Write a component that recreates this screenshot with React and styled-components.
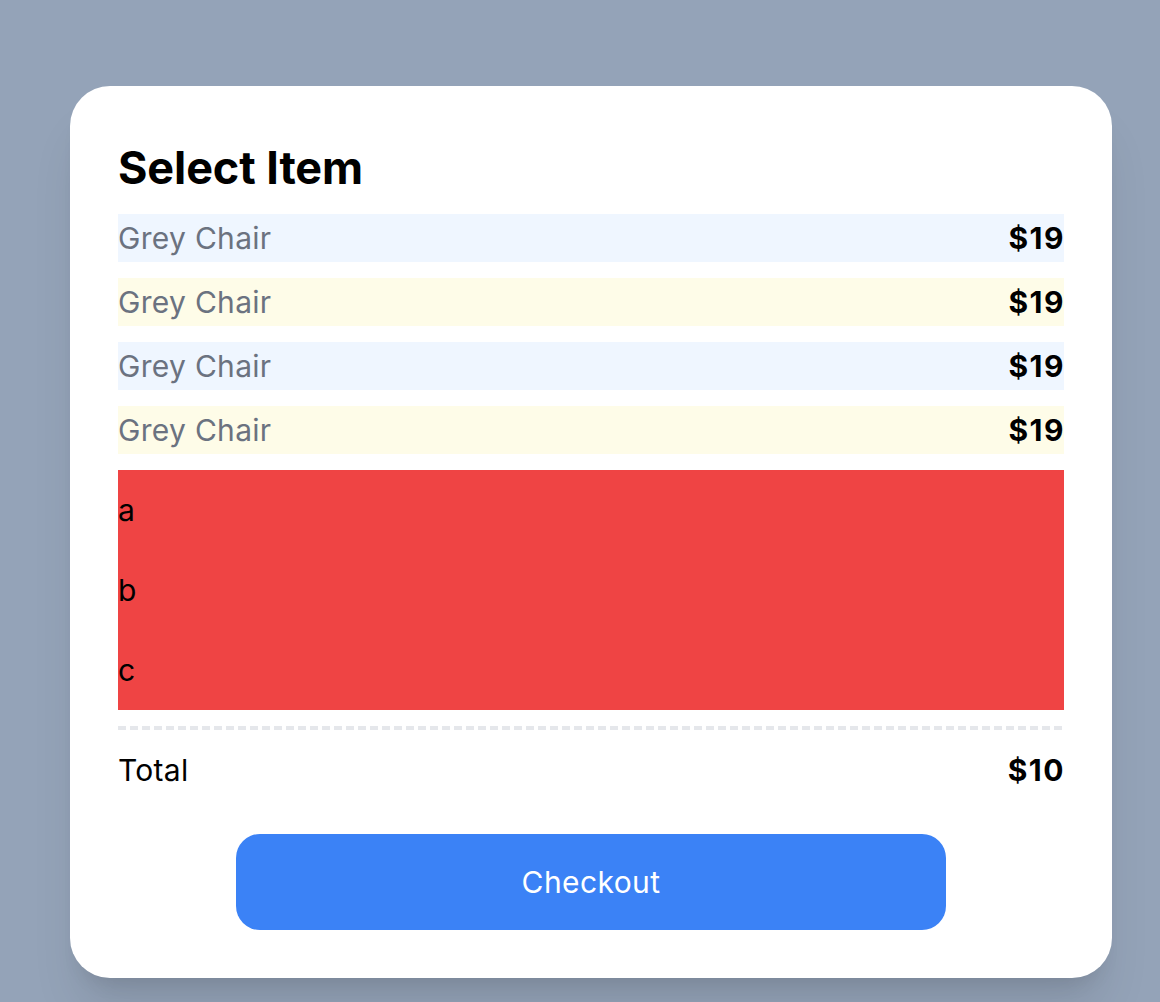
import React from "react";
import styled, { createGlobalStyle } from "styled-components";

const Global = createGlobalStyle`
  html, body { margin: 0; padding: 0; background: #94a3b8; }
  body { font-family: Inter, "Noto Sans", "Liberation Sans", sans-serif; -webkit-font-smoothing: antialiased; }
`;

const Page = styled.div`
  min-height: 1002px;
  box-sizing: border-box;
  padding: 86px 48px 24px 70px;
`;

const Card = styled.div`
  background: #ffffff;
  border-radius: 40px;
  padding: 48px;
  box-shadow: 0 40px 50px -10px rgba(0, 0, 0, 0.1), 0 16px 20px -12px rgba(0, 0, 0, 0.1);
  display: flex;
  flex-direction: column;
`;

const Title = styled.h1`
  margin: 4px 0 16px;
  font-size: 45px;
  line-height: 60px;
  font-weight: 700;
  color: #000;
  letter-spacing: -0.1px;
`;

const List = styled.div`
  display: flex;
  flex-direction: column;
  gap: 16px;
`;

const ItemRow = styled.div`
  display: flex;
  justify-content: space-between;
  align-items: center;
  height: 48px;
  background: ${(p) => (p.$tone === "yellow" ? "#fefce8" : "#eff6ff")};
  font-size: 30px;
  letter-spacing: 0.3px;
`;

const ItemName = styled.span`
  color: #6b7280;
`;

const Price = styled.span`
  font-weight: 700;
  color: #000;
  font-size: 30px;
  letter-spacing: 1.5px;
  margin-right: -1px;
`;

const RedBox = styled.div`
  background: #ef4444;
  display: flex;
  flex-direction: column;
`;

const Letter = styled.div`
  height: 80px;
  line-height: 80px;
  font-size: 30px;
  color: #000;
`;

const Divider = styled.div`
  height: 4px;
  margin-top: 16px;
  background: repeating-linear-gradient(to right, #e5e7eb 0 8px, transparent 8px 12px);
`;

const TotalRow = styled.div`
  display: flex;
  justify-content: space-between;
  align-items: center;
  height: 48px;
  margin-top: 16px;
  font-size: 30px;
  letter-spacing: 0.3px;
  color: #000;
`;

const Button = styled.button`
  align-self: center;
  width: 75%;
  height: 96px;
  margin-top: 40px;
  border: none;
  border-radius: 24px;
  background: #3b82f6;
  color: #fff;
  font-family: inherit;
  font-size: 30px;
  letter-spacing: 0.4px;
  cursor: pointer;
`;

const items = [
  { name: "Grey Chair", price: "$19", tone: "blue" },
  { name: "Grey Chair", price: "$19", tone: "yellow" },
  { name: "Grey Chair", price: "$19", tone: "blue" },
  { name: "Grey Chair", price: "$19", tone: "yellow" },
];

export default function App() {
  return (
    <>
      <Global />
      <Page>
        <Card>
          <Title>Select Item</Title>
          <List>
            {items.map((it, i) => (
              <ItemRow key={i} $tone={it.tone}>
                <ItemName>{it.name}</ItemName>
                <Price>{it.price}</Price>
              </ItemRow>
            ))}
            <RedBox>
              <Letter>a</Letter>
              <Letter>b</Letter>
              <Letter>c</Letter>
            </RedBox>
          </List>
          <Divider />
          <TotalRow>
            <span>Total</span>
            <Price>$10</Price>
          </TotalRow>
          <Button>Checkout</Button>
        </Card>
      </Page>
    </>
  );
}
